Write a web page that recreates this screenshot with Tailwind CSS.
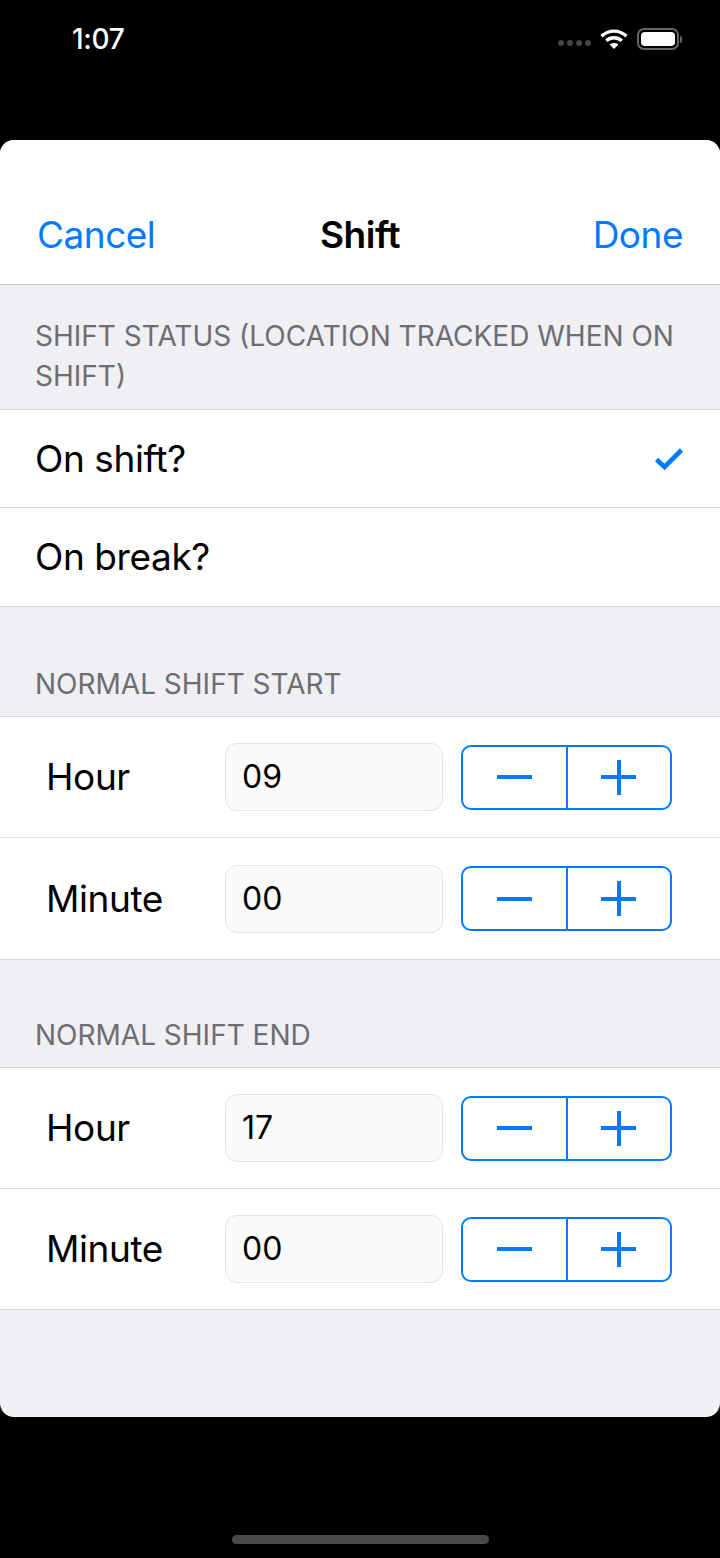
<!DOCTYPE html>
<html lang="en">
<head>
  <meta charset="UTF-8">
  <meta name="viewport" content="width=device-width, initial-scale=1.0">
  <title>Shift</title>
  <script src="https://cdn.jsdelivr.net/npm/@tailwindcss/browser@4"></script>
</head>
<body class="bg-black font-['Inter',sans-serif] w-[720px] h-[1558px] overflow-hidden flex flex-col">
  <!-- status bar -->
  <div class="h-[140px] shrink-0 flex items-start justify-between pt-[22px] pl-[72px] pr-[38px] text-white">
    <span class="text-[28px] leading-[34px] font-medium tracking-[-0.3px]">1:07</span>
    <div class="flex items-center gap-[9px] h-[34px]">
      <div class="flex gap-[3px] mt-[8px]">
        <span class="w-[6px] h-[6px] rounded-full bg-[#444]"></span>
        <span class="w-[6px] h-[6px] rounded-full bg-[#444]"></span>
        <span class="w-[6px] h-[6px] rounded-full bg-[#444]"></span>
        <span class="w-[6px] h-[6px] rounded-full bg-[#444]"></span>
      </div>
      <svg width="28" height="22" viewBox="0 0 28 22" fill="none" stroke="white" stroke-width="3.4">
        <path d="M1.5 8.2C8.5 1.4 19.5 1.4 26.5 8.2"/>
        <path d="M6.2 12.8C10.6 8.8 17.4 8.8 21.8 12.8"/>
        <path d="M14 21L9.6 16.4C12 14.4 16 14.4 18.4 16.4Z" fill="white" stroke="none"/>
      </svg>
      <div class="flex items-center gap-[1px]">
        <div class="w-[42px] h-[22px] rounded-[7px] border-2 border-[#666] p-[2px]">
          <div class="w-full h-full rounded-[4px] bg-white"></div>
        </div>
        <span class="w-[2px] h-[7px] rounded-r-full bg-[#666]"></span>
      </div>
    </div>
  </div>

  <!-- sheet -->
  <div class="h-[1277px] shrink-0 rounded-[14px] overflow-hidden bg-[#efeff4] flex flex-col">
    <div class="h-[145px] shrink-0 bg-white border-b border-[#c8c8cc] flex items-end justify-between pb-[26px] px-[37px] text-[37px] leading-[46px] relative">
      <span class="text-[#007aff] tracking-[-0.5px]">Cancel</span>
      <span class="absolute left-0 right-0 text-center font-semibold text-black tracking-[-0.5px]">Shift</span>
      <span class="text-[#007aff] tracking-[-0.5px]">Done</span>
    </div>

    <div class="h-[124px] shrink-0 px-[35px] pt-[31px] text-[28px] leading-[40px] text-[#6d6d72] uppercase">
      Shift status (location tracked when on shift)
    </div>
    <div class="bg-white border-y border-[#d6d6da] shrink-0">
      <div class="h-[98px] flex items-center justify-between pl-[35px] pr-[36px] text-[37px] text-black border-b border-[#d6d6da] ml-0">
        <span class="tracking-[-0.4px]">On shift?</span>
        <svg width="30" height="24" viewBox="0 0 30 24" fill="none" stroke="#007aff" stroke-width="4.6">
          <path d="M2.5 12.5L10.5 20L27.5 3"/>
        </svg>
      </div>
      <div class="h-[98px] flex items-center pl-[35px] text-[37px] text-black">
        <span class="tracking-[-0.4px]">On break?</span>
      </div>
    </div>

    <div class="h-[109px] shrink-0 px-[35px] flex items-end pb-[12px] text-[28px] leading-[40px] text-[#6d6d72] uppercase">Normal shift start</div>
    <div class="bg-white border-y border-[#d6d6da] shrink-0">
      <div class="h-[121px] flex items-center pl-[46px] border-b border-[#e0e0e3] ml-0">
        <span class="w-[179px] text-[37px] text-black tracking-[-0.4px]">Hour</span>
        <div class="w-[218px] h-[68px] rounded-[12px] border border-[#e3e3e3] bg-[#fafafa] flex items-center pl-[16px] text-[32px] text-black">09</div>
        <div class="ml-[18px] w-[211px] h-[65px] rounded-[10px] border-2 border-[#007aff] flex">
          <div class="flex-1 flex items-center justify-center border-r-2 border-[#007aff]"><span class="block w-[35px] h-[4px] bg-[#007aff]"></span></div>
          <div class="flex-1 flex items-center justify-center relative"><span class="block w-[35px] h-[4px] bg-[#007aff]"></span><span class="absolute w-[4px] h-[35px] bg-[#007aff]"></span></div>
        </div>
      </div>
      <div class="h-[121px] flex items-center pl-[46px]">
        <span class="w-[179px] text-[37px] text-black tracking-[-0.4px]">Minute</span>
        <div class="w-[218px] h-[68px] rounded-[12px] border border-[#e3e3e3] bg-[#fafafa] flex items-center pl-[16px] text-[32px] text-black">00</div>
        <div class="ml-[18px] w-[211px] h-[65px] rounded-[10px] border-2 border-[#007aff] flex">
          <div class="flex-1 flex items-center justify-center border-r-2 border-[#007aff]"><span class="block w-[35px] h-[4px] bg-[#007aff]"></span></div>
          <div class="flex-1 flex items-center justify-center relative"><span class="block w-[35px] h-[4px] bg-[#007aff]"></span><span class="absolute w-[4px] h-[35px] bg-[#007aff]"></span></div>
        </div>
      </div>
    </div>

    <div class="h-[107px] shrink-0 px-[35px] flex items-end pb-[12px] text-[28px] leading-[40px] text-[#6d6d72] uppercase">Normal shift end</div>
    <div class="bg-white border-y border-[#d6d6da] shrink-0">
      <div class="h-[121px] flex items-center pl-[46px] border-b border-[#e0e0e3]">
        <span class="w-[179px] text-[37px] text-black tracking-[-0.4px]">Hour</span>
        <div class="w-[218px] h-[68px] rounded-[12px] border border-[#e3e3e3] bg-[#fafafa] flex items-center pl-[16px] text-[32px] text-black">17</div>
        <div class="ml-[18px] w-[211px] h-[65px] rounded-[10px] border-2 border-[#007aff] flex">
          <div class="flex-1 flex items-center justify-center border-r-2 border-[#007aff]"><span class="block w-[35px] h-[4px] bg-[#007aff]"></span></div>
          <div class="flex-1 flex items-center justify-center relative"><span class="block w-[35px] h-[4px] bg-[#007aff]"></span><span class="absolute w-[4px] h-[35px] bg-[#007aff]"></span></div>
        </div>
      </div>
      <div class="h-[120px] flex items-center pl-[46px]">
        <span class="w-[179px] text-[37px] text-black tracking-[-0.4px]">Minute</span>
        <div class="w-[218px] h-[68px] rounded-[12px] border border-[#e3e3e3] bg-[#fafafa] flex items-center pl-[16px] text-[32px] text-black">00</div>
        <div class="ml-[18px] w-[211px] h-[65px] rounded-[10px] border-2 border-[#007aff] flex">
          <div class="flex-1 flex items-center justify-center border-r-2 border-[#007aff]"><span class="block w-[35px] h-[4px] bg-[#007aff]"></span></div>
          <div class="flex-1 flex items-center justify-center relative"><span class="block w-[35px] h-[4px] bg-[#007aff]"></span><span class="absolute w-[4px] h-[35px] bg-[#007aff]"></span></div>
        </div>
      </div>
    </div>
  </div>

  <!-- home indicator -->
  <div class="flex-1 flex items-end justify-center pb-[14px]">
    <span class="block w-[257px] h-[9px] rounded-full bg-[#4a4a4a]"></span>
  </div>
</body>
</html>
